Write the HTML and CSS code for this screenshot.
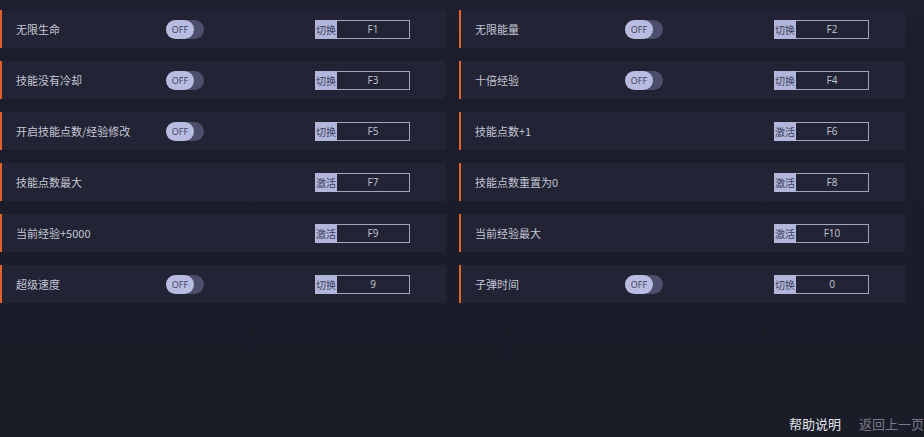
FILE: index.html
```html
<!DOCTYPE html>
<html lang="zh-CN">

<head>
  <meta charset="UTF-8">
  <meta name="viewport" content="width=device-width, initial-scale=1.0">
  <title>修改器</title>
  <link rel="stylesheet" href="styles.css">
</head>

<body>
  <!-- Cheat list -->
  <main class="cheat-grid">
    <div class="cheat">
      <span class="cheat-name">无限生命</span>
      <span class="toggle"><span class="knob">OFF</span></span>
      <span class="hotkey"><span class="hotkey-type">切换</span><span class="hotkey-key">F1</span></span>
    </div>
    <div class="cheat">
      <span class="cheat-name">无限能量</span>
      <span class="toggle"><span class="knob">OFF</span></span>
      <span class="hotkey"><span class="hotkey-type">切换</span><span class="hotkey-key">F2</span></span>
    </div>
    <div class="cheat">
      <span class="cheat-name">技能没有冷却</span>
      <span class="toggle"><span class="knob">OFF</span></span>
      <span class="hotkey"><span class="hotkey-type">切换</span><span class="hotkey-key">F3</span></span>
    </div>
    <div class="cheat">
      <span class="cheat-name">十倍经验</span>
      <span class="toggle"><span class="knob">OFF</span></span>
      <span class="hotkey"><span class="hotkey-type">切换</span><span class="hotkey-key">F4</span></span>
    </div>
    <div class="cheat">
      <span class="cheat-name">开启技能点数/经验修改</span>
      <span class="toggle"><span class="knob">OFF</span></span>
      <span class="hotkey"><span class="hotkey-type">切换</span><span class="hotkey-key">F5</span></span>
    </div>
    <div class="cheat">
      <span class="cheat-name">技能点数+1</span>
      <span></span>
      <span class="hotkey"><span class="hotkey-type">激活</span><span class="hotkey-key">F6</span></span>
    </div>
    <div class="cheat">
      <span class="cheat-name">技能点数最大</span>
      <span></span>
      <span class="hotkey"><span class="hotkey-type">激活</span><span class="hotkey-key">F7</span></span>
    </div>
    <div class="cheat">
      <span class="cheat-name">技能点数重置为0</span>
      <span></span>
      <span class="hotkey"><span class="hotkey-type">激活</span><span class="hotkey-key">F8</span></span>
    </div>
    <div class="cheat">
      <span class="cheat-name">当前经验+5000</span>
      <span></span>
      <span class="hotkey"><span class="hotkey-type">激活</span><span class="hotkey-key">F9</span></span>
    </div>
    <div class="cheat">
      <span class="cheat-name">当前经验最大</span>
      <span></span>
      <span class="hotkey"><span class="hotkey-type">激活</span><span class="hotkey-key">F10</span></span>
    </div>
    <div class="cheat">
      <span class="cheat-name">超级速度</span>
      <span class="toggle"><span class="knob">OFF</span></span>
      <span class="hotkey"><span class="hotkey-type">切换</span><span class="hotkey-key">9</span></span>
    </div>
    <div class="cheat">
      <span class="cheat-name">子弹时间</span>
      <span class="toggle"><span class="knob">OFF</span></span>
      <span class="hotkey"><span class="hotkey-type">切换</span><span class="hotkey-key">0</span></span>
    </div>
  </main>

  <!-- Footer links -->
  <footer>
    <a href="#" class="help">帮助说明</a>
    <a href="#" class="back">返回上一页</a>
  </footer>
</body>

</html>
```

FILE: styles.css
```css
html,
body {
  height: 100%;
}

body {
  margin: 0;
  font-family: "Noto Sans CJK SC", "Noto Sans", sans-serif;
  background: linear-gradient(180deg, #1e2030 0%, #1b1d2a 60px, #1a1c28 100%);
  color: #c9cad6;
  display: flex;
  flex-direction: column;
  overflow: hidden;
}

.cheat-grid {
  display: grid;
  grid-template-columns: 446px 446px;
  grid-auto-rows: 38px;
  column-gap: 13px;
  row-gap: 13px;
  padding-top: 10px;
}

.cheat {
  display: grid;
  grid-template-columns: 150px 149px 95px;
  align-items: center;
  padding-left: 14px;
  background-color: #222435;
  border-left: 2px solid #e2622a;
}

.cheat-name {
  font-size: 11px;
  color: #c4c6d4;
  white-space: nowrap;
}

.toggle {
  width: 38px;
  height: 19px;
  border-radius: 10px;
  background-color: #4c4f6c;
  display: flex;
}

.knob {
  width: 28px;
  height: 19px;
  border-radius: 10px;
  background-color: #b8bce0;
  color: #3b3e5c;
  font-family: "Open Sans", sans-serif;
  font-size: 9px;
  line-height: 19px;
  text-align: center;
}

.hotkey {
  display: flex;
  height: 19px;
  width: 95px;
  font-size: 10px;
  line-height: 19px;
}

.hotkey-type {
  width: 22px;
  background-color: #b2b6da;
  color: #3c3f5c;
  text-align: center;
  white-space: nowrap;
  overflow: hidden;
}

.hotkey-key {
  flex: 1;
  border: 1px solid #a3a5bd;
  border-left: none;
  line-height: 17px;
  text-align: center;
  color: #c4c6d4;
  font-family: "Open Sans", sans-serif;
}

/* Footer */
footer {
  margin-top: auto;
  display: flex;
  justify-content: flex-end;
  gap: 18px;
  padding-bottom: 4px;
  font-size: 13px;
}

footer a {
  text-decoration: none;
}

.help {
  color: #e4e5ee;
}

.back {
  color: #787a8c;
}
```
